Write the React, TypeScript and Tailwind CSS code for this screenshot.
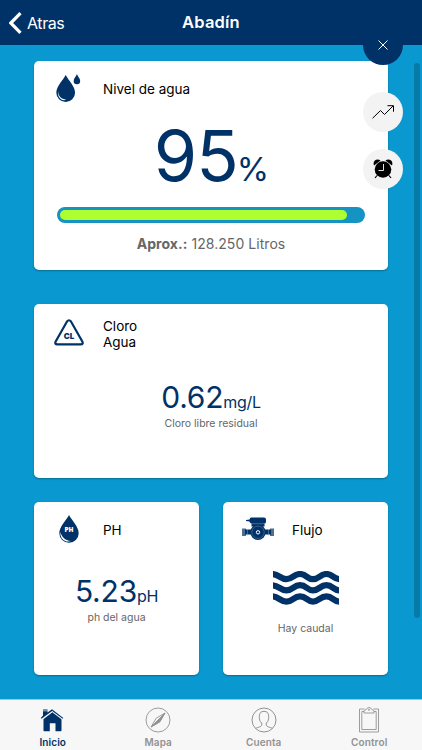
import type { ReactNode } from 'react';
import clsx from 'clsx';

type CardProps = {
  icon: ReactNode;
  title: ReactNode;
  className?: string;
  children: ReactNode;
};

const Card = ({ icon, title, className, children }: CardProps) => (
  <section
    className={clsx('flex flex-col rounded-[5px] bg-white shadow-[0_1px_2px_rgba(0,0,0,0.3)]', className)}
  >
    <div className="flex h-14 shrink-0 items-center">
      <div className="flex w-[69px] shrink-0 justify-center">{icon}</div>
      <h2 className="text-[13.5px] leading-4 text-black">{title}</h2>
    </div>
    {children}
  </section>
);

type ReadingProps = { value: string; unit: string; label: string; className: string };

const Reading = ({ value, unit, label, className }: ReadingProps) => (
  <div className={clsx('flex flex-col items-center', className)}>
    <p className="flex h-10 items-baseline text-[#003267]">
      <span className="text-[30px] leading-10 tracking-[-0.2px]">{value}</span>
      <span className="text-[16px] tracking-[-0.3px]">{unit}</span>
    </p>
    <p className="text-[10.5px] leading-[14px] text-[#666]">{label}</p>
  </div>
);

const DropsIcon = () => (
  <svg width="25" height="29" viewBox="0 0 26 31" className="mb-0.5" fill="#003267">
    <path d="M10 1C7 7 0 13 0 20a10 10 0 0 0 20 0C20 13 13 7 10 1Z" />
    <path d="M22 0c-1 3-3.500 4.500-3.500 7.500a3.500 3.500 0 0 0 7 0C25.500 4.500 23 3 22 0Z" />
    <path d="M2 18.500c0 5 3 8.500 8.500 9C5.500 29.500 .8 24.500 2 18.500Z" fill="#fff" />
  </svg>
);

const ChlorineIcon = () => (
  <svg width="30" height="27" viewBox="0 0 30 27">
    <path
      d="M13 2.500 1.700 22.500q-1.300 2.800 1.600 2.800h23.400q2.900 0 1.600-2.800L17 2.500q-2-2.500-4 0Z"
      fill="none"
      stroke="#003267"
      strokeWidth="2.200"
    />
    <text x="15" y="19.500" textAnchor="middle" fontFamily="Inter, sans-serif" fontSize="8" fontWeight="900" fill="#003267">
      CL
    </text>
  </svg>
);

const PhIcon = () => (
  <svg width="20" height="29" viewBox="0 0 20 30" preserveAspectRatio="none" className="mb-0.5">
    <path d="M10 0C7 6 .3 12 .3 19a9.700 9.700 0 0 0 19.400 0C19.700 12 13 6 10 0Z" fill="#003267" />
    <path d="M1.500 17.500c1 5 4.200 8.500 10.500 9.500-6 2-11.500-3-10.500-9.500Z" fill="#fff" />
    <text x="10" y="18" textAnchor="middle" fontFamily="Open Sans, sans-serif" fontSize="6.500" fontWeight="800" fill="#fff">
      PH
    </text>
  </svg>
);

const PumpIcon = () => (
  <svg width="32" height="24" viewBox="0 0 32 24" className="mb-[3px]" fill="#003267">
    <path d="M9 .5h13q2 0 2 2V5q0 1.500-2 1.500H9Q7.500 5.500 7.500 4.500L4 4V3l3.500-.5Q8 .5 9 .5Z" />
    <path d="M9.500 6h13v3.500h-13zM3 12.500h26v5H3z" />
    <path d="M0 11.500h4v7.500H0zM28 11.500h4v7.500h-4z" opacity=".7" />
    <circle cx="16" cy="15.300" r="7.700" />
    <circle cx="16" cy="15.300" r="6.200" fill="none" stroke="#7188a8" strokeWidth=".5" />
    <circle cx="16" cy="15.300" r="1.700" fill="none" stroke="#fff" strokeWidth="1" />
    <path d="M5.500 12v6.500M26.500 12v6.500M9 6.700h14" stroke="#8da0b8" strokeWidth=".5" />
  </svg>
);

const WavesIcon = () => (
  <svg width="66" height="34" viewBox="0 0 66 34" fill="none" stroke="#003267" strokeWidth="6.200">
    {[0, 11.2, 22.4].map((y) => (
      <path
        key={y}
        transform={`translate(0 ${y})`}
        d="M-1 3C6 3 7 8.200 13.500 8.200S20.500 3 27 3 34 8.200 40 8.200 47 3 53.500 3 60 8.200 67 8.200"
      />
    ))}
  </svg>
);

const ClockIcon = () => (
  <svg width="20" height="20" viewBox="0 0 20 20">
    <path d="M1 6.500C-.8 2 4-1 7.500 1.500ZM19 6.500C20.800 2 16-1 12.500 1.500Z" />
    <circle cx="10" cy="10.500" r="8.300" />
    <path d="m4 16.500-2 2.500M16 16.500l2 2.500" stroke="#000" strokeWidth="1.200" />
    <path d="M10.500 5v6.500H5.500" fill="none" stroke="#fff" strokeWidth=".9" />
  </svg>
);

const HomeIcon = () => (
  <svg width="25" height="26" viewBox="0 0 25 26" fill="#003267">
    <path d="M3.500 12 12.500 5 21.500 12v11.500q0 .8-.8.800h-5.200v-8H9.800v8H4.300q-.8 0-.8-.8Z" />
    <path d="M3 8.500V2.500h4.500v3L12 2.300l11.300 8.600-.7.900L12.200 4 1.500 11.800l-.7-.9Z" />
    <path d="M3 3.800h4.500M2.500 12.200 12.300 4.900l9.700 7.300" fill="none" stroke="#f7f7f7" strokeWidth=".7" />
  </svg>
);

const CompassIcon = () => (
  <svg width="26" height="26" viewBox="0 0 26 26" fill="none" stroke="#929292" strokeWidth=".9">
    <circle cx="13" cy="13" r="12" />
    <path d="m20 6-5.200 8.800L6 20l5.200-8.800Z" />
    <path d="m20 6-5.200 8.800L6 20l7-7Z" fill="#929292" />
  </svg>
);

const UserIcon = () => (
  <svg width="26" height="26" viewBox="0 0 26 26" fill="none" stroke="#929292" strokeWidth="1">
    <circle cx="13" cy="13" r="12" />
    <path d="M4.500 21.300c2-1 6.200-1.300 6.200-3.300v-2C8.500 14.500 8.300 12 8.300 9.500c0-3.500 1.700-5.200 4.700-5.200s4.700 1.700 4.700 5.200c0 2.500-.2 5-2.400 6.500v2c0 2 4.200 2.300 6.200 3.300" />
  </svg>
);

const ClipboardIcon = () => (
  <svg width="22" height="26" viewBox="0 0 22 26" fill="none" stroke="#929292" strokeWidth=".9">
    <path d="M6.500 2H1.500v23h19V2h-5" />
    <path d="M6 4.500H3.800v18h14.400v-18H16" />
    <path d="M6 6V4q0-1 2-1.200Q9 .5 11 .5t3 2.300q2 .2 2 1.200v2Z" />
    <circle cx="11" cy="2.800" r=".6" />
  </svg>
);

const tabs = [
  { label: 'Inicio', icon: <HomeIcon />, active: true },
  { label: 'Mapa', icon: <CompassIcon /> },
  { label: 'Cuenta', icon: <UserIcon /> },
  { label: 'Control', icon: <ClipboardIcon /> },
];

const level = 95;

const App = () => (
  <div className="relative flex h-[750px] w-[422px] flex-col overflow-hidden bg-[#0999d0] font-[Inter,sans-serif]">
    <header className="grid h-[45px] shrink-0 grid-cols-[1fr_auto_1fr] items-center bg-[#003267] text-white">
      <button className="flex items-center gap-[5px] pl-[9px] text-[16px] leading-5 tracking-[-0.4px]">
        <svg width="13" height="22" viewBox="0 0 13 22" fill="none" stroke="#fff" strokeWidth="3.200">
          <path d="M11.500 1.200 1.800 11l9.700 9.800" />
        </svg>
        Atras
      </button>
      <h1 className="text-[16.5px] font-semibold tracking-[0.2px]">Abadín</h1>
    </header>

    <main className="flex flex-1 flex-col px-[34px] pt-4">
      <Card icon={<DropsIcon />} title="Nivel de agua" className="h-[209px]">
        <p className="-mt-[3px] flex h-[84px] items-baseline justify-center text-[#003267]">
          <span className="text-[70px] leading-[84px] tracking-[-1px]">{level}</span>
          <span className="-ml-px text-[33px] tracking-[-1px]">%</span>
        </p>
        <div className="mx-[23px] mt-[9px] h-4 shrink-0 rounded-full bg-[#1593c3] p-[3px]">
          <div className="h-full rounded-full bg-[#adff2f]" style={{ width: `${level}%` }} />
        </div>
        <p className="mt-3 text-center text-[14px] leading-[18px] tracking-[0.05px] text-[#666]">
          <b>Aprox.:</b> 128.250 Litros
        </p>
      </Card>

      <Card
        icon={<ChlorineIcon />}
        title={
          <span className="block pt-[3px]">
            Cloro
            <br />
            Agua
          </span>
        }
        className="mt-[34px] h-[174px]"
      >
        <Reading value="0.62" unit="mg/L" label="Cloro libre residual" className="pt-[17px]" />
      </Card>

      <div className="mt-6 grid grid-cols-2 gap-6">
        <Card icon={<PhIcon />} title="PH" className="h-[173px]">
          <Reading value="5.23" unit="pH" label="ph del agua" className="pt-[13px]" />
        </Card>
        <Card icon={<PumpIcon />} title="Flujo" className="h-[173px]">
          <div className="flex flex-col items-center pt-[13px]">
            <WavesIcon />
            <p className="mt-[17px] text-[10.5px] leading-[14px] text-[#666]">Hay caudal</p>
          </div>
        </Card>
      </div>
    </main>

    <nav className="grid h-[51px] shrink-0 grid-cols-4 border-t border-[#a9c4cf] bg-[#f7f7f7]">
      {tabs.map((tab) => (
        <button
          key={tab.label}
          className={clsx(
            'flex flex-col items-center pt-[7px] text-[10px] leading-3 font-semibold tracking-[0.1px]',
            tab.active ? 'text-[#003267]' : 'text-[#929292]',
          )}
        >
          {tab.icon}
          <span className="mt-[3px]">{tab.label}</span>
        </button>
      ))}
    </nav>

    {/* floating actions over the first card */}
    <div className="absolute top-[25px] right-[19px] flex flex-col">
      <button className="flex size-10 items-center justify-center rounded-full bg-[#003267]">
        <svg width="10" height="10" viewBox="0 0 10 10" stroke="#fff" strokeWidth="1">
          <path d="m.5.5 9 9m0-9-9 9" />
        </svg>
      </button>
      <button className="mt-[27px] flex size-10 items-center justify-center rounded-full bg-[#f3f3f3]">
        <svg width="22" height="14" viewBox="0 0 22 14" fill="none" stroke="#000" strokeWidth="1">
          <path d="m.5 13.300 8-7.800 4 4L21 1M15.500.7h6v6" />
        </svg>
      </button>
      <button className="mt-[17px] flex size-10 items-center justify-center rounded-full bg-[#f3f3f3]">
        <ClockIcon />
      </button>
    </div>
    <div className="absolute top-[63px] right-[2px] h-[555px] w-[6px] rounded-full bg-[#077ba7]" />
  </div>
);

export default App;
